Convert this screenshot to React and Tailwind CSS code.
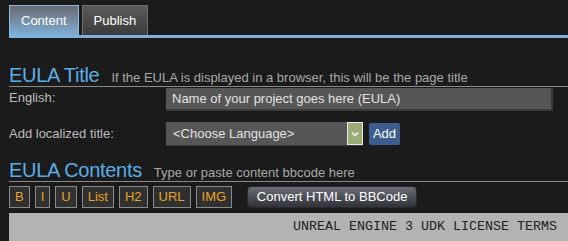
import { useState } from 'react';

const bbTags = ['B', 'I', 'U', 'List', 'H2', 'URL', 'IMG'];

function Tab({ label, active, onClick }) {
  return (
    <button
      onClick={onClick}
      className={
        active
          ? 'h-[30px] px-[11px] border border-b-0 border-[#8cbbe0] bg-gradient-to-b from-[#686c74] to-[#7eaed6] text-white text-[13px]'
          : 'h-[30px] px-[11px] border border-b-0 border-[#6e6e6e] bg-gradient-to-b from-[#5a5a5a] to-[#3c3c3c] text-white text-[13px]'
      }
    >
      {label}
    </button>
  );
}

function SectionTitle({ title, hint }) {
  return (
    <div className="flex items-baseline h-[23px] border-b border-[#8a8a8a]">
      <h2 className="text-[20px] leading-[22px] tracking-[-0.3px] text-[#5aafe6]">{title}</h2>
      <span className="ml-[12px] text-[13px] text-[#a8a8a8]">{hint}</span>
    </div>
  );
}

export default function App() {
  const [tab, setTab] = useState('content');

  return (
    <div className="w-[568px] h-[241px] overflow-hidden bg-[#1b1b1b] pt-[5px] pl-[9px] font-['Liberation_Sans',Arial,sans-serif]">
      <div className="flex gap-[3px]">
        <Tab label="Content" active={tab === 'content'} onClick={() => setTab('content')} />
        <Tab label="Publish" active={tab === 'publish'} onClick={() => setTab('publish')} />
      </div>
      <div className="h-[3px] bg-[#7eb0d8]" />

      <div className="mt-[26px]">
        <SectionTitle title="EULA Title" hint="If the EULA is displayed in a browser, this will be the page title" />
        <div className="flex items-start">
          <label className="w-[157px] pt-[1px] text-[13px] text-[#bdbdbd]">English:</label>
          <div className="mt-[1px] w-[387px] h-[23px] flex items-center px-[6px] bg-[#565656] border-b-2 border-r-2 border-[#3a3a3a] text-[13px] text-[#e2e2e2]">
            Name of your project goes here (EULA)
          </div>
        </div>
        <div className="flex items-center mt-[11px]">
          <label className="w-[157px] text-[13px] text-[#bdbdbd]">Add localized title:</label>
          <div className="flex items-center h-[24px] w-[197px] bg-[#565656] border-b border-[#3a3a3a]">
            <span className="flex-1 pl-[7px] text-[13px] text-[#e2e2e2]">&lt;Choose Language&gt;</span>
            <span className="w-[16px] h-[23px] flex items-center justify-center bg-[#9aab78] border border-[#e8e8e8]">
              <svg width="8" height="6" viewBox="0 0 8 6">
                <path d="M1 1.5 L4 4.5 L7 1.5" stroke="#f4f4f4" strokeWidth="1.6" fill="none" />
              </svg>
            </span>
          </div>
          <button className="ml-[6px] h-[22px] w-[31px] rounded-[2px] bg-[#3c5d8d] text-white text-[13px]">Add</button>
        </div>
      </div>

      <div className="mt-[13px]">
        <SectionTitle title="EULA Contents" hint="Type or paste content bbcode here" />
        <div className="flex items-center mt-[4px] gap-[5px]">
          {bbTags.map((t) => (
            <button
              key={t}
              className="h-[22px] px-[5px] border border-[#8a8a8a] bg-[#303030] text-[13px] text-[#e9a526]"
            >
              {t}
            </button>
          ))}
          <button className="ml-[10px] h-[22px] w-[170px] rounded-[4px] border border-[#2a2a2a] bg-gradient-to-b from-[#6a6e75] to-[#30333a] text-white text-[13px]">
            Convert HTML to BBCode
          </button>
        </div>
        <div className="mt-[5px] h-[40px] bg-[#b3b3b3] pl-[284px] pt-[4px] font-['Liberation_Mono',monospace] text-[13.33px] text-[#222]">
          UNREAL ENGINE 3 UDK LICENSE TERMS
        </div>
      </div>
    </div>
  );
}
